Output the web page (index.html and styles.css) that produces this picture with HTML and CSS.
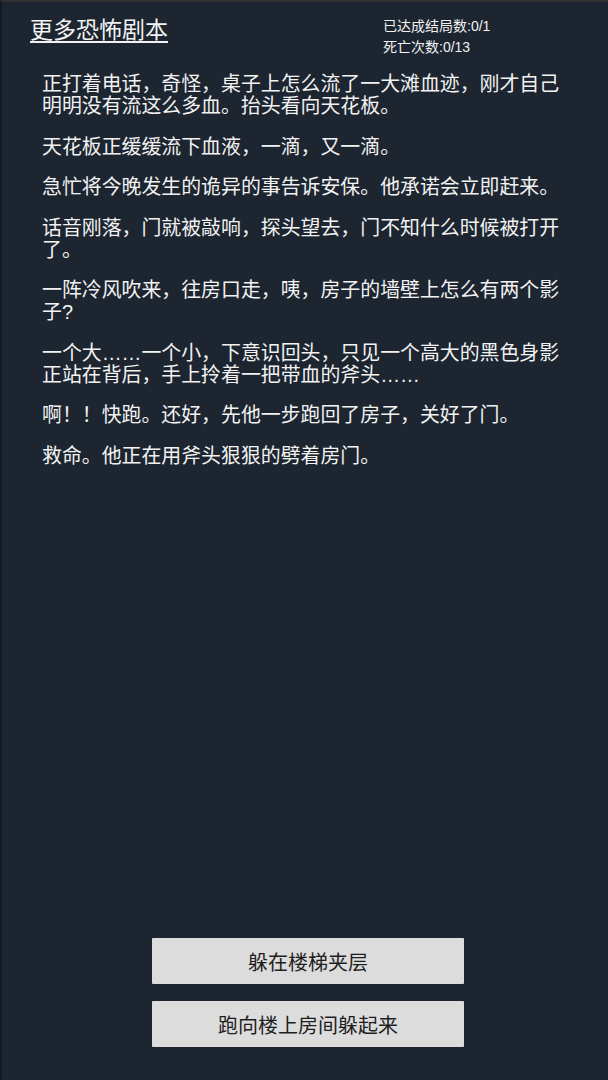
FILE: index.html
```html
<!DOCTYPE html>
<html lang="zh-CN">
<head>
    <meta charset="UTF-8">
    <meta name="viewport" content="width=device-width, initial-scale=1.0">
    <title>恐怖剧本</title>
    <link rel="stylesheet" href="styles.css">
</head>
<body>

<div class="screen">
    <!-- Top bar: link to more scripts and the progress counters -->
    <div class="top-bar">
        <a class="more-link" href="#">更多恐怖剧本</a>
        <div class="stats">
            <div>已达成结局数:0/1</div>
            <div>死亡次数:0/13</div>
        </div>
    </div>

    <!-- Story text -->
    <div class="story">
        <p>正打着电话，奇怪，桌子上怎么流了一大滩血迹，刚才自己明明没有流这么多血。抬头看向天花板。</p>
        <p>天花板正缓缓流下血液，一滴，又一滴。</p>
        <p>急忙将今晚发生的诡异的事告诉安保。他承诺会立即赶来。</p>
        <p>话音刚落，门就被敲响，探头望去，门不知什么时候被打开了。</p>
        <p>一阵冷风吹来，往房口走，咦，房子的墙壁上怎么有两个影子?</p>
        <p>一个大……一个小，下意识回头，只见一个高大的黑色身影正站在背后，手上拎着一把带血的斧头……</p>
        <p>啊！！快跑。还好，先他一步跑回了房子，关好了门。</p>
        <p>救命。他正在用斧头狠狠的劈着房门。</p>
    </div>

    <!-- Choices -->
    <div class="choices">
        <button type="button" class="choice">躲在楼梯夹层</button>
        <button type="button" class="choice">跑向楼上房间躲起来</button>
    </div>
</div>

</body>
</html>
```

FILE: styles.css
```css
html, body {
    margin: 0;
    padding: 0;
}

body {
    font-family: 'Liberation Sans', 'Noto Sans CJK SC', sans-serif;
    background-color: #1c2530;
    color: #f2f2f2;
}

.screen {
    box-sizing: border-box;
    height: 1080px;
    display: flex;
    flex-direction: column;
    border-top: 2px solid #2d2f31;
    border-left: 2px solid #151b22;
}

.top-bar {
    display: flex;
    padding: 13px 0 0 28px;
}

.more-link {
    width: 353px;
    font-size: 23px;
    line-height: 30px;
    color: #f2f2f2;
    text-decoration: underline;
    text-underline-offset: 3px;
}

.stats {
    font-size: 14px;
    line-height: 21px;
    padding-top: 1px;
}

.story {
    padding: 15px 36px 0 40px;
    font-size: 19.9px;
    line-height: 22px;
}

.story p {
    margin: 0 0 18.5px 0;
}

.choices {
    margin-top: auto;
    padding: 0 0 33px 6px;
    display: flex;
    flex-direction: column;
    align-items: center;
    gap: 17px;
}

.choice {
    width: 312px;
    height: 46px;
    background-color: #dcdcdc;
    color: #1e1e1e;
    border: none;
    border-radius: 1px;
    font-family: 'Liberation Sans', 'Noto Sans CJK SC', sans-serif;
    font-size: 20px;
    cursor: pointer;
}
```
